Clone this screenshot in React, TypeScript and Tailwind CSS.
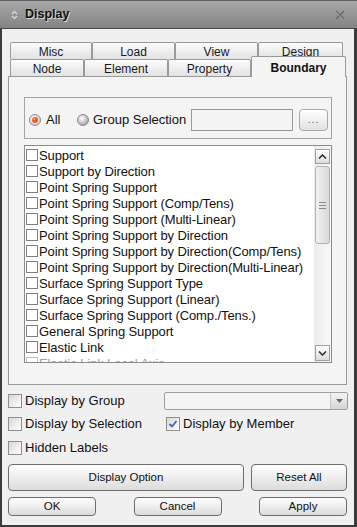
import React from 'react';

const items = [
  'Support',
  'Support by Direction',
  'Point Spring Support',
  'Point Spring Support (Comp/Tens)',
  'Point Spring Support (Multi-Linear)',
  'Point Spring Support by Direction',
  'Point Spring Support by Direction(Comp/Tens)',
  'Point Spring Support by Direction(Multi-Linear)',
  'Surface Spring Support Type',
  'Surface Spring Support (Linear)',
  'Surface Spring Support (Comp./Tens.)',
  'General Spring Support',
  'Elastic Link',
  'Elastic Link Local Axis',
];

// small chevron used by scrollbar buttons
function Chevron({ down }: { down?: boolean }) {
  return (
    <svg width="9" height="6" viewBox="0 0 9 6">
      <path
        d={down ? 'M1 1.5 L4.5 5 L8 1.5' : 'M1 4.5 L4.5 1 L8 4.5'}
        fill="none"
        stroke="#303030"
        strokeWidth="1.6"
      />
    </svg>
  );
}

function Radio({ on }: { on?: boolean }) {
  return (
    <svg width="12" height="12" viewBox="0 0 12 12" className="shrink-0">
      <defs>
        <radialGradient id={on ? 'rOn' : 'rOff'} cx="0.4" cy="0.35" r="0.7">
          <stop offset="0" stopColor="#ffffff" />
          <stop offset="1" stopColor={on ? '#c8c8c8' : '#9c9c9c'} />
        </radialGradient>
      </defs>
      <circle cx="6" cy="6" r="5.5" fill={`url(#${on ? 'rOn' : 'rOff'})`} stroke="#8c8c8c" />
      {on && <circle cx="6" cy="6" r="3" fill="#ef5a22" />}
      {on && <circle cx="5.2" cy="5.2" r="1" fill="#ffb48a" />}
    </svg>
  );
}

function Check({ checked }: { checked?: boolean }) {
  return (
    <div className="w-[14px] h-[14px] shrink-0 border border-[#8e8e8e] bg-linear-to-br from-[#d8d8d8] to-white flex items-center justify-center">
      {checked && (
        <svg width="10" height="10" viewBox="0 0 10 10">
          <path d="M1.5 5 L4 7.5 L8.5 2" fill="none" stroke="#4a5cc4" strokeWidth="1.8" />
        </svg>
      )}
    </div>
  );
}

function Tab({ label, className }: { label: string; className: string }) {
  return (
    <div
      className={`${className} border-l border-t border-r border-[#9a9a9a] rounded-t-[2px] bg-linear-to-b from-[#fcfcfc] to-[#e2e2e2] flex items-center justify-center pt-[2px] text-[12px] text-[#1a1a1a] leading-none`}
    >
      {label}
    </div>
  );
}

export default function App() {
  return (
    <div className="w-[357px] h-[527px] bg-[#3c3c3c] flex flex-col font-['Liberation_Sans',Arial,sans-serif] overflow-hidden select-none">
      {/* title bar */}
      <div className="h-[29px] shrink-0 border-t border-[#5c5c5c] border-b border-b-[#4a4a4a] bg-linear-to-b from-[#a9a9a9] to-[#838383] flex items-center pl-[11px] pr-[12px]">
        <svg width="7" height="10" viewBox="0 0 7 10">
          <path d="M1 4 L3.5 1.5 L6 4 M1 6 L3.5 8.5 L6 6" fill="none" stroke="#dcdcdc" strokeWidth="1.2" />
        </svg>
        <span className="ml-[7px] text-[12.5px] font-bold text-[#111] [text-shadow:1px_1px_0_#d8d8d8]">Display</span>
        <svg width="10" height="10" viewBox="0 0 10 10" className="ml-auto">
          <path d="M1 1 L9 9 M9 1 L1 9" stroke="#6a6a6a" strokeWidth="1.6" />
          <path d="M1 2 L8 9" stroke="#b4b4b4" strokeWidth="0.6" />
        </svg>
      </div>

      {/* body */}
      <div className="flex-1 ml-[2px] mr-[3px] mb-[2px] bg-[#f0f0f0] flex flex-col">
        {/* tabs */}
        <div className="mt-[13px] ml-[8px] flex h-[17px]">
          <Tab label="Misc" className="w-[82px] h-[17px]" />
          <Tab label="Load" className="w-[83px] h-[17px]" />
          <Tab label="View" className="w-[83px] h-[17px]" />
          <Tab label="Design" className="w-[85px] h-[17px]" />
        </div>
        <div className="ml-[8px] flex items-end h-[17px]">
          <Tab label="Node" className="w-[74px] h-[17px]" />
          <Tab label="Element" className="w-[84px] h-[17px]" />
          <Tab label="Property" className="w-[83px] h-[17px]" />
          <div className="relative z-10 w-[95px] h-[21px] -mb-[1px] border-l border-t border-r border-[#9a9a9a] rounded-t-[2px] bg-[#f4f4f4] flex items-center justify-center pt-[2px] text-[12px] font-bold text-[#111] leading-none">
            Boundary
          </div>
        </div>

        {/* tab panel */}
        <div className="ml-[6px] w-[339px] h-[309px] border border-[#9a9a9a] bg-[#f4f4f4] flex flex-col">
          {/* radio group */}
          <div className="mt-[20px] ml-[15px] w-[308px] h-[42px] border border-[#a4a4a4] flex items-center pl-[4px] pt-[3px] text-[13px] text-[#111]">
            <div className="w-[48px] flex items-center">
              <Radio on />
              <span className="ml-[5px]">All</span>
            </div>
            <div className="w-[114px] flex items-center">
              <Radio />
              <span className="ml-[4px]">Group Selection</span>
            </div>
            <div className="w-[102px] h-[22px] border border-[#9a9a9a] bg-[#f4f4f4]" />
            <div className="ml-[6px] w-[29px] h-[22px] border border-[#a8a8a8] rounded-[4px] bg-linear-to-b from-white to-[#e2e2e2] flex items-end justify-center pb-[5px]">
              <span className="text-[10px] leading-none text-[#3a55a8] tracking-[1px]">...</span>
            </div>
          </div>

          {/* list box */}
          <div className="mt-[6px] ml-[15px] w-[308px] h-[218px] border border-[#8c8c8c] bg-white flex">
            <div className="flex-1 overflow-hidden pt-[1px] pl-[1px]">
              {items.map((t, i) => (
                <div key={t} className="h-[16px] flex items-center text-[13px] tracking-[-0.1px] leading-none whitespace-nowrap">
                  <div className={`w-[12px] h-[12px] shrink-0 border ${i === 13 ? 'border-[#c0c0c0]' : 'border-[#808080]'} bg-white`} />
                  <span className={`ml-[1px] ${i === 13 ? 'text-[#a0a0a0]' : 'text-[#111]'}`}>{t}</span>
                </div>
              ))}
            </div>
            {/* scrollbar */}
            <div className="w-[17px] bg-linear-to-r from-[#ececec] to-[#f8f8f8] flex flex-col p-[1px] pt-[3px] pb-[1px]">
              <div className="h-[15px] border border-[#a0a0a0] bg-linear-to-b from-white to-[#dcdcdc] flex items-center justify-center">
                <Chevron />
              </div>
              <div className="mt-[2px] h-[78px] border border-[#b4b4b4] rounded-[3px] bg-linear-to-r from-[#f2f2f2] via-[#e4e4e4] to-[#d8d8d8] flex flex-col items-center justify-center gap-[2px]">
                <div className="w-[7px] h-[1px] bg-[#8a8a8a]" />
                <div className="w-[7px] h-[1px] bg-[#8a8a8a]" />
                <div className="w-[7px] h-[1px] bg-[#8a8a8a]" />
              </div>
              <div className="flex-1" />
              <div className="h-[16px] border border-[#a0a0a0] bg-linear-to-b from-white to-[#dcdcdc] flex items-center justify-center">
                <Chevron down />
              </div>
            </div>
          </div>
        </div>

        {/* options */}
        <div className="mt-[7px] ml-[6px] h-[18px] flex items-center text-[13px] text-[#111]">
          <Check />
          <span className="ml-[3px] w-[139px]">Display by Group</span>
          <div className="w-[184px] h-[18px] border border-[#a0a0a0] rounded-[2px] bg-[#f4f4f4] flex justify-end">
            <div className="w-[17px] h-full border-l border-[#c4c4c4] bg-linear-to-b from-[#f4f4f4] to-[#d4d4d4] flex items-center justify-center">
              <svg width="7" height="4" viewBox="0 0 7 4">
                <path d="M0 0 L7 0 L3.5 4 Z" fill="#6a6a6a" />
              </svg>
            </div>
          </div>
        </div>
        <div className="mt-[5px] ml-[6px] h-[18px] flex items-center text-[13px] text-[#111]">
          <Check />
          <span className="ml-[3px] w-[141px]">Display by Selection</span>
          <Check checked />
          <span className="ml-[3px]">Display by Member</span>
        </div>
        <div className="mt-[6px] ml-[6px] h-[18px] flex items-center text-[13px] text-[#111]">
          <Check />
          <span className="ml-[3px]">Hidden Labels</span>
        </div>

        {/* buttons */}
        <div className="mt-[7px] ml-[6px] flex gap-[7px] h-[27px]">
          <div className="w-[236px] border border-[#6e6e6e] rounded-[4px] bg-linear-to-b from-white to-[#dcdcdc] flex items-center justify-center text-[11.5px] text-[#111]">
            Display Option
          </div>
          <div className="w-[96px] border border-[#6e6e6e] rounded-[4px] bg-linear-to-b from-white to-[#dcdcdc] flex items-center justify-center text-[11.5px] text-[#111]">
            Reset All
          </div>
        </div>
        <div className="mt-[6px] ml-[6px] w-[339px] flex justify-between h-[19px]">
          <div className="w-[88px] border border-[#6e6e6e] rounded-[4px] bg-linear-to-b from-white to-[#dcdcdc] flex items-center justify-center text-[11.5px] text-[#111]">
            OK
          </div>
          <div className="w-[88px] border border-[#6e6e6e] rounded-[4px] bg-linear-to-b from-white to-[#dcdcdc] flex items-center justify-center text-[11.5px] text-[#111]">
            Cancel
          </div>
          <div className="w-[88px] border border-[#6e6e6e] rounded-[4px] bg-linear-to-b from-white to-[#dcdcdc] flex items-center justify-center text-[11.5px] text-[#111]">
            Apply
          </div>
        </div>
      </div>
    </div>
  );
}
